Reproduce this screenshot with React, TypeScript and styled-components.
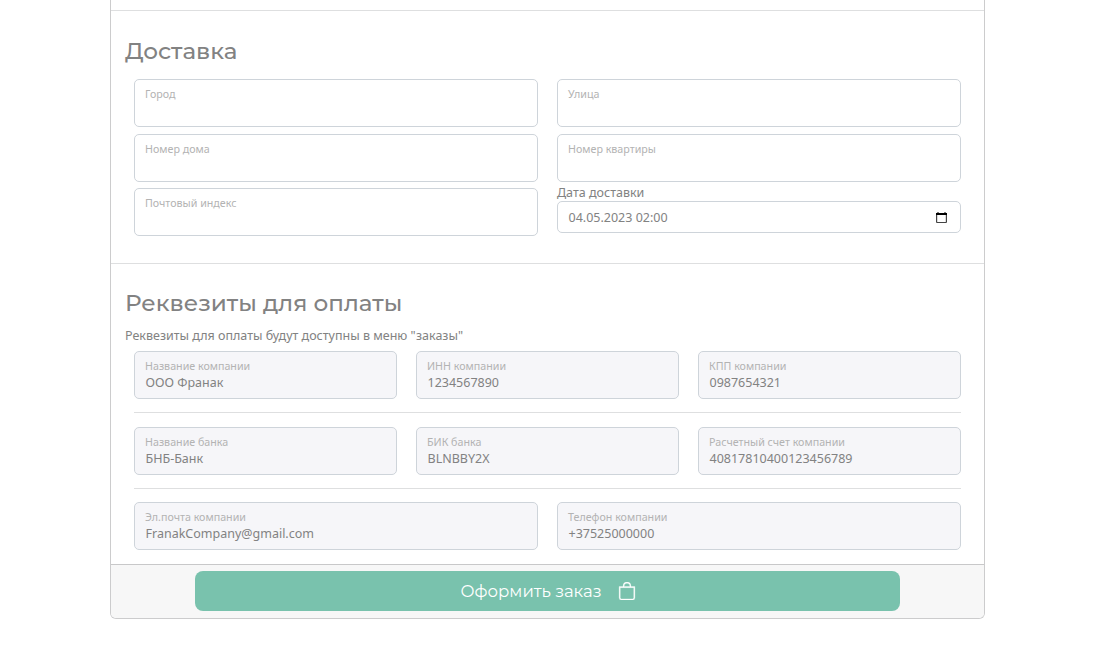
import React from "react";
import styled, { createGlobalStyle } from "styled-components";
import { BsBag } from "react-icons/bs";

const GlobalStyle = createGlobalStyle`
  *, *::before, *::after { box-sizing: border-box; }
  body {
    margin: 0;
    background: #fff;
    color: #828282;
    font-family: "Noto Sans", "Open Sans", sans-serif;
    font-size: 12.5px;
    line-height: 16px;
    overflow: hidden;
  }
`;

const Page = styled.main`
  padding-left: 110px;
`;

const Card = styled.form`
  width: 875px;
  height: 619px;
  display: flex;
  flex-direction: column;
  border: 1px solid #cccccd;
  border-top: 0;
  border-radius: 0 0 6px 6px;
  background: #fff;
  overflow: hidden;
`;

const Section = styled.section<{ $height: number }>`
  height: ${(p) => p.$height}px;
  flex: none;
  border-top: 1px solid #dedfe0;
  padding: 0 23px 0 14px;
`;

const Previous = styled.div`
  height: 10px;
  flex: none;
`;

const Heading = styled.h2<{ $top: number }>`
  margin: ${(p) => p.$top}px 0 0;
  font-family: "Montserrat", "Inter", sans-serif;
  font-size: 23.1px;
  line-height: 30px;
  font-weight: 500;
  white-space: nowrap;
`;

const Note = styled.p`
  margin: 9px 0 0;
  line-height: 18px;
  white-space: nowrap;
`;

const Columns = styled.div<{ $count: number; $top: number }>`
  display: grid;
  grid-template-columns: repeat(${(p) => p.$count}, 1fr);
  column-gap: 19px;
  align-items: start;
  margin: ${(p) => p.$top}px 0 0 9px;
`;

const FieldBox = styled.label<{ $filled?: boolean }>`
  display: flex;
  flex-direction: column;
  height: 48px;
  padding: 6px 10px 0;
  border: 1px solid #ced4da;
  border-radius: 5px;
  background: ${(p) => (p.$filled ? "#f6f6f9" : "#fff")};
`;

const Caption = styled.span`
  color: #b3b3b3;
  font-size: 10.7px;
  line-height: 16px;
  white-space: nowrap;
`;

const Value = styled.span`
  padding-left: 0.5px;
  line-height: 17px;
  white-space: nowrap;
`;

const Divider = styled.hr`
  height: 1px;
  border: 0;
  margin: 13px 0 0 9px;
  background: #dedfe0;
`;

const DateGroup = styled.div`
  display: flex;
  flex-direction: column;
`;

const DateLabel = styled.span`
  height: 13px;
  line-height: 9px;
`;

const DateBox = styled.div`
  display: flex;
  align-items: center;
  justify-content: space-between;
  height: 32px;
  padding: 0 12px 0 10.5px;
  border: 1px solid #ced4da;
  border-radius: 5px;
`;

const DateValue = styled.span`
  padding-top: 2px;
`;

const Footer = styled.footer`
  flex: 1;
  display: flex;
  justify-content: center;
  align-items: flex-start;
  padding-top: 6px;
  border-top: 1px solid #c8c8c9;
  background: #f7f7f7;
`;

const Submit = styled.button`
  display: flex;
  align-items: center;
  justify-content: center;
  gap: 17px;
  width: 705px;
  height: 40px;
  padding: 0 0 0 2px;
  border: 0;
  border-radius: 8px;
  background: #79c2ad;
  color: #fff;
  font-family: "Montserrat", "Inter", sans-serif;
  font-size: 16.5px;
`;

const BagIcon = styled(BsBag)`
  stroke: currentColor;
  stroke-width: 0.25px;
`;

function CalendarIcon() {
  return (
    <svg width="13" height="13" viewBox="0 0 13 13" aria-hidden="true">
      <path d="M1 2h11v2H1zM2.5 1h1v1h-1zM9.5 1h1v1h-1z" fill="#000" />
      <path d="M1.6 4v7q0 .5.5.5h8.8q.5 0 .5-.5V4" fill="none" stroke="#444" strokeWidth="1.2" />
    </svg>
  );
}

function Field({ label, value }: { label: string; value?: string }) {
  return (
    <FieldBox $filled={value !== undefined}>
      <Caption>{label}</Caption>
      {value && <Value>{value}</Value>}
    </FieldBox>
  );
}

export default function App() {
  return (
    <Page>
      <GlobalStyle />
      <Card>
        <Previous />
        <Section $height={253}>
          <Heading $top={25}>Доставка</Heading>
          <Columns $count={2} $top={13}>
            <Field label="Город" />
            <Field label="Улица" />
          </Columns>
          <Columns $count={2} $top={7}>
            <Field label="Номер дома" />
            <Field label="Номер квартиры" />
          </Columns>
          <Columns $count={2} $top={6}>
            <Field label="Почтовый индекс" />
            <DateGroup>
              <DateLabel>Дата доставки</DateLabel>
              <DateBox>
                <DateValue>04.05.2023 02:00</DateValue>
                <CalendarIcon />
              </DateBox>
            </DateGroup>
          </Columns>
        </Section>
        <Section $height={301}>
          <Heading $top={24}>Реквезиты для оплаты</Heading>
          <Note>Реквезиты для оплаты будут доступны в меню "заказы"</Note>
          <Columns $count={3} $top={6}>
            <Field label="Название компании" value="ООО Франак" />
            <Field label="ИНН компании" value="1234567890" />
            <Field label="КПП компании" value="0987654321" />
          </Columns>
          <Divider />
          <Columns $count={3} $top={14}>
            <Field label="Название банка" value="БНБ-Банк" />
            <Field label="БИК банка" value="BLNBBY2X" />
            <Field label="Расчетный счет компании" value="40817810400123456789" />
          </Columns>
          <Divider />
          <Columns $count={2} $top={13}>
            <Field label="Эл.почта компании" value="FranakCompany@gmail.com" />
            <Field label="Телефон компании" value="+37525000000" />
          </Columns>
        </Section>
        <Footer>
          <Submit type="button">
            <span>Оформить заказ</span>
            <BagIcon size={18} />
          </Submit>
        </Footer>
      </Card>
    </Page>
  );
}
